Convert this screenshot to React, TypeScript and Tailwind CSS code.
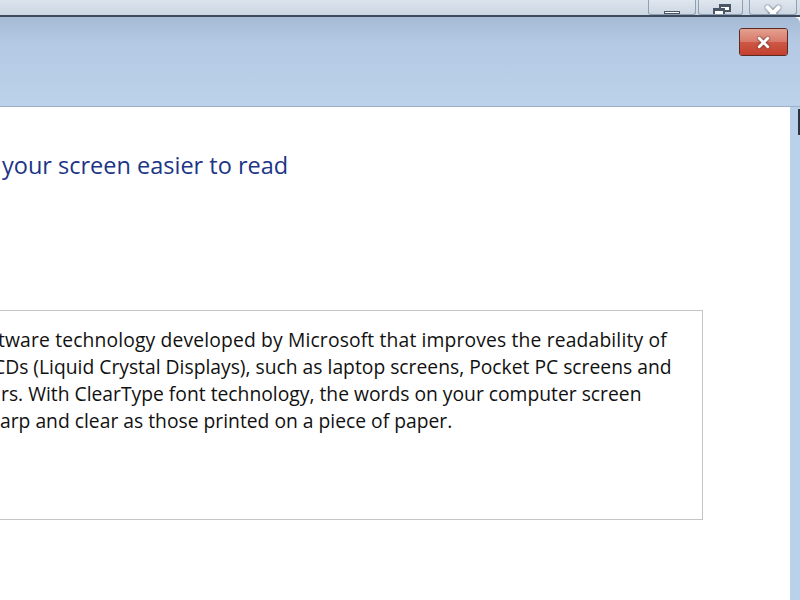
import { X } from 'lucide-react';

const lines = [
  { text: 'tware technology developed by Microsoft that improves the readability of', shift: 'ml-[-2px] tracking-[0.15px]' },
  { text: 'CDs (Liquid Crystal Displays), such as laptop screens, Pocket PC screens and', shift: 'ml-[-7px]' },
  { text: 'rs. With ClearType font technology, the words on your computer screen', shift: 'ml-[1px]' },
  { text: 'arp and clear as those printed on a piece of paper.', shift: 'ml-[0px]' },
];

function BackButtons() {
  return (
    <div className="flex h-[15px] items-end pr-[3px]">
      <div className="relative flex h-[15px] w-[48px] justify-center rounded-b-[3px] border border-t-0 border-[#8fa0b4] bg-gradient-to-b from-[#dfe6ee] to-[#cdd7e3]">
        <div className="absolute bottom-[0px] h-[3px] w-[16px] border border-[#4a5566] bg-white" />
      </div>
      <div className="relative ml-[2px] h-[15px] w-[45px] overflow-hidden rounded-b-[3px] border border-t-0 border-[#8fa0b4] bg-gradient-to-b from-[#dfe6ee] to-[#cdd7e3]">
        <div className="absolute left-[20px] top-[4px] h-[8px] w-[12px] border-2 border-t-[3px] border-[#4a5566] bg-white" />
        <div className="absolute left-[14px] top-[8px] h-[9px] w-[12px] border-2 border-t-[3px] border-[#4a5566] bg-white" />
      </div>
      <div className="relative ml-[6px] flex h-[15px] w-[48px] justify-center overflow-hidden rounded-b-[3px] border border-t-0 border-[#8fa0b4] bg-gradient-to-b from-[#dfe6ee] to-[#cdd7e3]">
        <X className="absolute top-[2px] h-[22px] w-[22px] text-white" strokeWidth={4.5} style={{ filter: 'drop-shadow(0 0 1px #3b4656)' }} />
      </div>
    </div>
  );
}

function CloseButton() {
  return (
    <div className="flex h-[28px] w-[49px] items-center justify-center overflow-hidden rounded-[3px] border border-[#5a2a24] shadow-[inset_0_0_0_1px_rgba(255,200,190,0.6)]">
      <div className="relative flex h-full w-full items-center justify-center bg-gradient-to-b from-[#e3a08f] via-[#d9796a] via-50% to-[#c23d2b]">
        <div className="absolute inset-x-0 bottom-0 h-1/2 bg-[#c4432f]/60" />
        <X className="relative h-[17px] w-[17px] text-white" strokeWidth={4} style={{ filter: 'drop-shadow(0 0 1px #4a2018)' }} />
      </div>
    </div>
  );
}

export default function App() {
  return (
    <div className="flex h-[600px] w-[800px] flex-col overflow-hidden bg-white font-['Open_Sans',sans-serif]">
      <div className="flex h-[17px] shrink-0 justify-end border-b-2 border-[#3d4a5b] bg-gradient-to-b from-[#dbe3ec] to-[#ccd7e3]">
        <BackButtons />
      </div>

      <div className="flex h-[90px] shrink-0 justify-end rounded-tr-[6px] border-b border-[#9fb0c4] bg-gradient-to-b from-[#a6bad4] via-[#b4cae4] via-30% to-[#bbd2ea] pr-[12px] pt-[11px]">
        <CloseButton />
      </div>

      <div className="flex flex-1">
        <div className="flex-1 bg-white">
          <h1 className="ml-[2px] mt-[42px] whitespace-nowrap text-[23.5px] leading-[32px] text-[#1c3587]">
            your screen easier to read
          </h1>

          <div className="mt-[129px] h-[210px] w-[703px] border border-l-0 border-[#c4c4c4] pt-[15px]">
            {lines.map((line) => (
              <div key={line.text} className={`whitespace-nowrap text-[19.3px] leading-[27px] text-[#111] ${line.shift}`}>
                {line.text}
              </div>
            ))}
          </div>
        </div>
        <div className="flex w-[10px] shrink-0 bg-[#b9d1ea]">
          <div className="ml-auto mt-[2px] h-[26px] w-[2px] bg-[#2c3440]" />
        </div>
      </div>
    </div>
  );
}
